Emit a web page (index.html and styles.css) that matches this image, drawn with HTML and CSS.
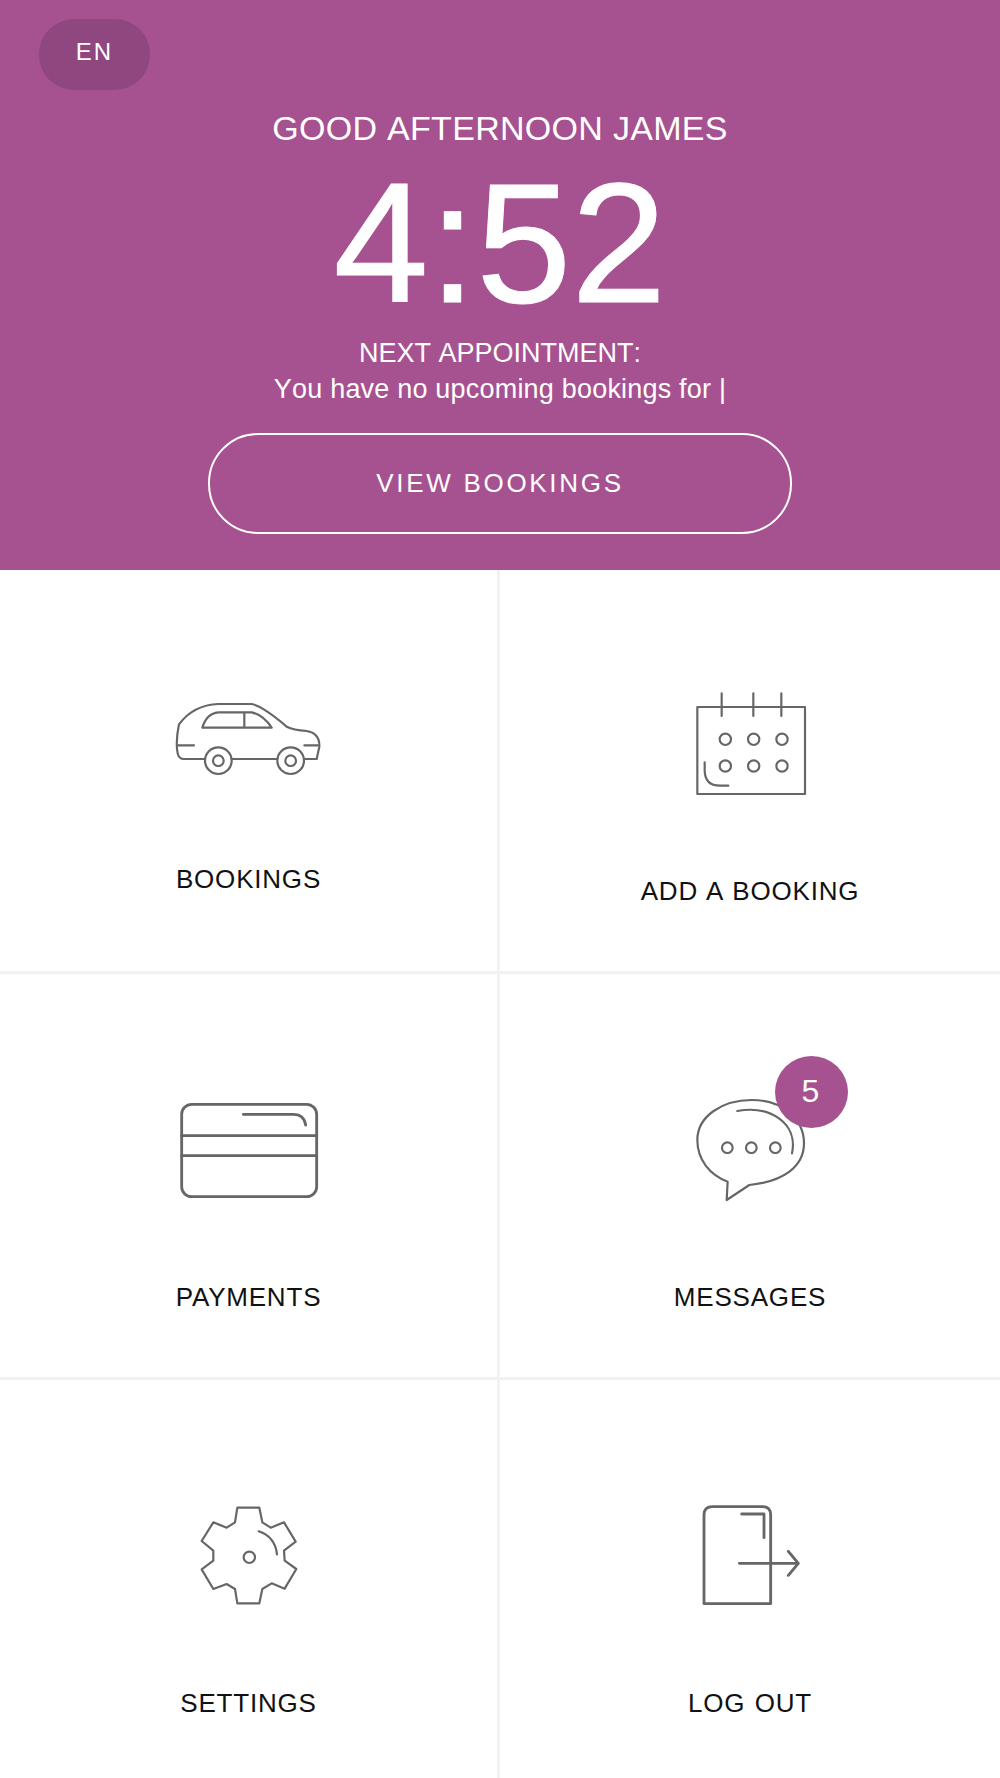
FILE: index.html
```html
<!DOCTYPE html>
<html lang="en">
<head>
    <meta charset="UTF-8">
    <meta name="viewport" content="width=device-width, initial-scale=1.0">
    <title>Home</title>
    <link rel="stylesheet" href="styles.css">
</head>
<body>
    <header class="hero">
        <button class="lang-btn">EN</button>
        <h1 class="greeting">GOOD AFTERNOON JAMES</h1>
        <div class="clock">4:52</div>
        <p class="next-title">NEXT APPOINTMENT:</p>
        <p class="next-text">You have no upcoming bookings for |</p>
        <a class="view-btn" href="#">VIEW BOOKINGS</a>
    </header>
    <nav class="menu">
        <a class="menu-item" href="#">
            <svg class="icon" width="197" height="146" viewBox="0 0 591 438">
                <path d="M163 267H102Q86 267 83 250Q76 215 87 163Q130 105 205 102H305Q340 110 410 170Q430 180 470 183Q510 190 508 230L500 267H463M245 267H382M85 226H132M463 226H505"/>
                <circle cx="205" cy="272" r="40"/>
                <circle cx="205" cy="272" r="16"/>
                <circle cx="422" cy="272" r="40"/>
                <circle cx="422" cy="272" r="16"/>
                <path d="M157 173Q170 130 205 127H305Q340 135 365 173ZM283 127V173"/>
            </svg>
            <span class="menu-label">BOOKINGS</span>
        </a>
        <a class="menu-item" href="#">
            <svg class="icon" width="160" height="158" viewBox="0 0 480 474">
                <rect x="82" y="111" width="323" height="261"/>
                <path d="M155 70V138M250 70V138M334 70V138M104 277V300Q104 347 150 347H175"/>
                <circle cx="166" cy="208" r="17"/>
                <circle cx="251" cy="208" r="17"/>
                <circle cx="336" cy="208" r="17"/>
                <circle cx="166" cy="288" r="17"/>
                <circle cx="251" cy="288" r="17"/>
                <circle cx="336" cy="288" r="17"/>
            </svg>
            <span class="menu-label">ADD A BOOKING</span>
        </a>
        <a class="menu-item" href="#">
            <svg class="icon icon-bold" width="177" height="160" viewBox="0 -18 531 480">
                <rect x="65" y="73" width="405" height="277" rx="30"/>
                <path d="M65 167H470M65 227H470M250 103H400Q432 103 437 135"/>
            </svg>
            <span class="menu-label">PAYMENTS</span>
        </a>
        <a class="menu-item" href="#">
            <svg class="icon" width="140" height="160" viewBox="0 102 420 480">
                <path d="M143 425C90 405 52 360 52 300C52 230 125 180 215 180C305 180 372 235 372 310C372 380 310 425 208 435L140 480Z"/>
                <path d="M172 213C270 195 355 250 336 340"/>
                <circle cx="142" cy="323" r="16"/>
                <circle cx="214" cy="323" r="16"/>
                <circle cx="286" cy="323" r="16"/>
            </svg>
            <span class="badge">5</span>
            <span class="menu-label">MESSAGES</span>
        </a>
        <a class="menu-item" href="#">
            <svg class="icon" width="137" height="160" viewBox="0 -30 411 480">
                <path d="M172 53H238L247 97L272 113L312 97L347 155L312 182L314 212L349 237L314 296L275 280L247 297L238 340H172L165 297L140 282L100 297L65 238L100 212L100 182L65 153L100 97L140 113L165 97Z"/>
                <circle cx="208" cy="202" r="17"/>
                <path d="M236 124Q285 140 291 193"/>
            </svg>
            <span class="menu-label">SETTINGS</span>
        </a>
        <a class="menu-item" href="#">
            <svg class="icon icon-bold" width="140" height="160" viewBox="0 -30 420 480">
                <path d="M72 341V75Q72 50 97 50H248Q272 50 272 75V341Z"/>
                <path d="M185 72H252V143M178 220H352M325 184L355 220L325 256"/>
            </svg>
            <span class="menu-label">LOG OUT</span>
        </a>
    </nav>
</body>
</html>
```
FILE: styles.css
```css
* {
    box-sizing: border-box;
}

body {
    margin: 0;
    font-family: "Liberation Sans", Arial, sans-serif;
    color: #111;
    background-color: white;
}

.hero {
    position: relative;
    height: 570px;
    padding-top: 107px;
    background-color: #a65290;
    color: white;
    text-align: center;
    font-kerning: none;
}

.lang-btn {
    position: absolute;
    top: 19px;
    left: 39px;
    width: 111px;
    height: 71px;
    padding: 0 0 6px;
    border: none;
    border-radius: 35px;
    background-color: #8f4780;
    color: white;
    font-family: inherit;
    font-size: 24px;
    letter-spacing: 2px;
}

.greeting {
    margin: 0;
    font-size: 34px;
    font-weight: normal;
    line-height: 42px;
    letter-spacing: 0.3px;
}

.clock {
    font-size: 171px;
    line-height: 187px;
    margin-bottom: -1px;
    -webkit-text-stroke: 1px white;
}

.next-title {
    margin: 0;
    font-size: 27px;
    line-height: 36px;
}

.next-text {
    margin: 0;
    font-size: 27px;
    line-height: 37px;
    letter-spacing: 0.2px;
}

.view-btn {
    display: block;
    width: 584px;
    height: 101px;
    margin: 25px auto 0;
    border: 2px solid white;
    border-radius: 50px;
    color: white;
    font-size: 26px;
    line-height: 97px;
    letter-spacing: 2.7px;
    text-decoration: none;
}

.menu {
    display: grid;
    grid-template-columns: 500px 500px;
    grid-template-rows: 404px 406px 398px;
}

.menu-item {
    position: relative;
    display: flex;
    flex-direction: column;
    align-items: center;
    padding-top: 100px;
    color: #111;
    text-decoration: none;
    border-bottom: 3px solid #f2f2f2;
}

.menu-item:nth-child(odd) {
    border-right: 3px solid #f2f2f2;
}

.menu-item:nth-last-child(-n+2) {
    border-bottom: none;
}

.icon {
    display: block;
    fill: none;
    stroke: #666;
    stroke-width: 6.5;
    stroke-linecap: round;
    stroke-linejoin: round;
}

.icon-bold {
    stroke-width: 8.5;
}

.menu-label {
    margin-top: 48px;
    font-size: 26px;
    line-height: 30px;
    letter-spacing: 0.8px;
    word-spacing: 1.5px;
}

.badge {
    position: absolute;
    top: 82px;
    left: 275px;
    width: 73px;
    height: 72px;
    padding-right: 2px;
    border-radius: 50%;
    background-color: #a65290;
    color: white;
    font-size: 32px;
    line-height: 70px;
    text-align: center;
}
```
